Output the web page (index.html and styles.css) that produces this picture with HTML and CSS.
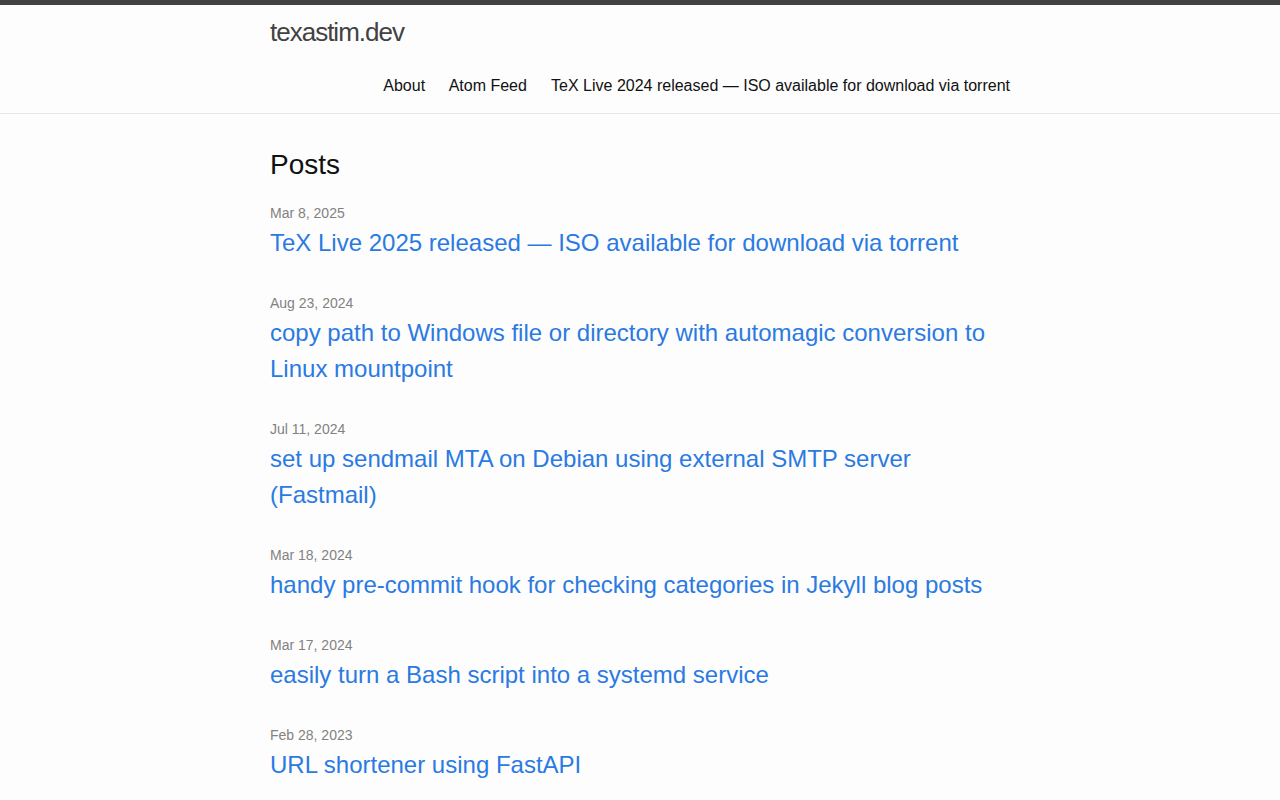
FILE: index.html
```html
<!DOCTYPE html>
<html lang="en">
<head>
<meta charset="utf-8">
<title>texastim.dev</title>
<link rel="stylesheet" href="styles.css">
</head>
<body>
<header class="site-header">
  <div class="wrapper header-inner">
    <a class="site-title" href="#">texastim.dev</a>
    <nav class="site-nav">
      <a class="page-link" href="#">About</a>
      <a class="page-link" href="#">Atom Feed</a>
      <a class="page-link" href="#">TeX Live 2024 released — ISO available for download via torrent</a>
    </nav>
  </div>
</header>
<main class="page-content">
  <div class="wrapper">
    <h2 class="post-list-heading">Posts</h2>
    <ul class="post-list">
      <li><span class="post-meta">Mar 8, 2025</span><h3><a class="post-link" href="#">TeX Live 2025 released — ISO available for download via torrent</a></h3></li>
      <li><span class="post-meta">Aug 23, 2024</span><h3><a class="post-link" href="#">copy path to Windows file or directory with automagic conversion to Linux mountpoint</a></h3></li>
      <li><span class="post-meta">Jul 11, 2024</span><h3><a class="post-link" href="#">set up sendmail MTA on Debian using external SMTP server (Fastmail)</a></h3></li>
      <li><span class="post-meta">Mar 18, 2024</span><h3><a class="post-link" href="#">handy pre-commit hook for checking categories in Jekyll blog posts</a></h3></li>
      <li><span class="post-meta">Mar 17, 2024</span><h3><a class="post-link" href="#">easily turn a Bash script into a systemd service</a></h3></li>
      <li><span class="post-meta">Feb 28, 2023</span><h3><a class="post-link" href="#">URL shortener using FastAPI</a></h3></li>
    </ul>
  </div>
</main>
</body>
</html>
```
FILE: styles.css
```css
html, body {
  margin: 0;
  padding: 0;
}
body {
  font: 400 16px/1.5 "Liberation Sans", Arial, sans-serif;
  color: #111111;
  background: #fdfdfd;
}
.wrapper {
  max-width: 740px;
  margin: 0 auto;
  padding: 0 30px;
}
.site-header {
  border-top: 5px solid #424242;
  border-bottom: 1px solid #e8e8e8;
  min-height: 55.95px;
}
.header-inner {
  display: flex;
  flex-wrap: wrap;
  justify-content: space-between;
}
.site-title {
  font-size: 26px;
  font-weight: 300;
  line-height: 54px;
  letter-spacing: -1px;
  color: #424242;
  text-decoration: none;
}
.site-nav {
  margin-left: auto;
  line-height: 54px;
}
.page-link {
  color: #111111;
  line-height: 1.5;
  text-decoration: none;
}
.page-link:not(:last-child) {
  margin-right: 20px;
}
.page-content {
  padding: 30px 0;
}
h2, h3 {
  margin: 0 0 15px;
  font-weight: 400;
}
.post-list-heading {
  font-size: 28px;
}
.post-list {
  list-style: none;
  margin: 0;
  padding: 0;
}
.post-list > li {
  margin-bottom: 30px;
}
.post-meta {
  font-size: 14px;
  color: #828282;
}
.post-list h3 {
  font-size: 24px;
}
.post-link {
  display: block;
  color: #2a7ae2;
  text-decoration: none;
}
```
